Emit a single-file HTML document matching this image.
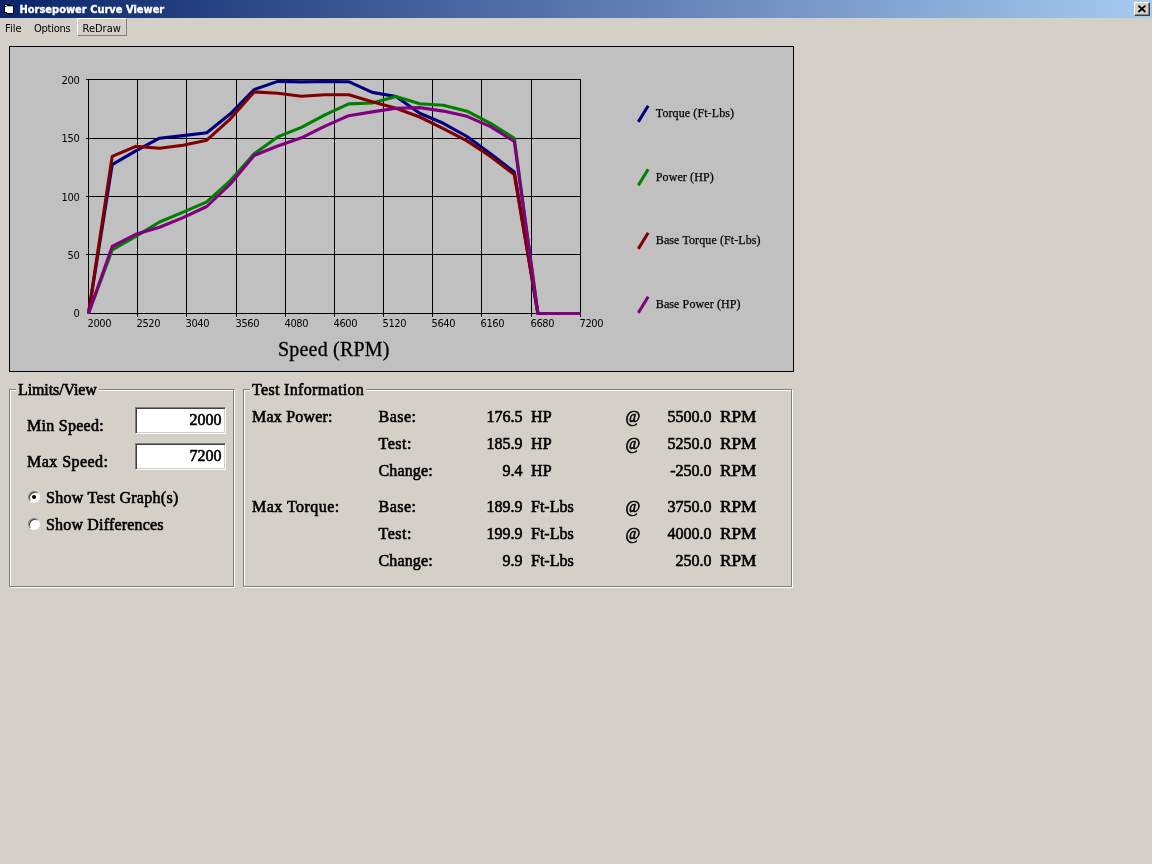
<!DOCTYPE html>
<html><head><meta charset="utf-8"><title>Horsepower Curve Viewer</title>
<style>
html,body{margin:0;padding:0}
body{width:1152px;height:864px;overflow:hidden;background:#D4D0C8;position:relative;font-family:"Liberation Sans",sans-serif;}
.abs{position:absolute}
#root{position:absolute;left:0;top:0;width:1152px;height:864px;will-change:transform}
#title{position:absolute;left:0;top:0;width:1152px;height:18px;background:linear-gradient(to right,#0A246A 0%,#A6CAF0 100%);}
#title .cap{position:absolute;left:19.5px;top:3px;font:bold 11px/13px "DejaVu Sans Condensed","Liberation Sans",sans-serif;color:#fff;white-space:nowrap;-webkit-text-stroke:0.3px #fff}
#close{position:absolute;left:1134px;top:2px;width:16px;height:14px;background:#D4D0C8;box-sizing:border-box;border:1px solid;border-color:#fff #404040 #404040 #fff;box-shadow:inset -1px -1px 0 #808080;}
.menu{position:absolute;top:22px;font:11px/14px "DejaVu Sans Condensed","Liberation Sans",sans-serif;color:#000;white-space:nowrap}
#redraw{position:absolute;left:77px;top:18px;width:50px;height:18px;box-sizing:border-box;border:1px solid;border-color:#fff #808080 #808080 #fff;}
#panel{position:absolute;left:9px;top:46px;width:785px;height:326px;box-sizing:border-box;border:1px solid #000;background:#C0C0C0}
svg.chart{position:absolute;left:0;top:0}
.tick text{font:11px "DejaVu Sans Condensed","Liberation Sans",sans-serif;fill:#000;letter-spacing:-0.4px}
.xlabel{font:20px "Liberation Serif",serif;fill:#000;letter-spacing:0.2px;stroke:#000;stroke-width:0.3px}
.leg{font:12px "Liberation Serif",serif;fill:#000;letter-spacing:0.1px;stroke:#000;stroke-width:0.25px}
.gb{position:absolute;box-sizing:border-box;border:1px solid #808080;box-shadow:inset 1px 1px 0 #fff, 1px 1px 0 #fff}
.gbt{position:absolute;background:#D4D0C8;padding:0 2px}
.t,.gbt{font:16px/18px "Liberation Serif",serif;color:#000;white-space:nowrap;-webkit-text-stroke:0.6px #000}
.t{position:absolute}
.r{text-align:right}
.rpm{display:inline-block;transform:scaleX(1.075);transform-origin:0 0}
.inp{position:absolute;box-sizing:border-box;background:#fff;border:1px solid;border-color:#808080 #fff #fff #808080;box-shadow:inset 1px 1px 0 #404040, inset -1px -1px 0 #D4D0C8}
.radio{position:absolute;width:12px;height:12px;border-radius:50%;box-sizing:border-box;background:#fff;border:1px solid;border-color:#808080 #fff #fff #808080;box-shadow:inset 1px 1px 0 #404040}
.radio.on::after{content:"";position:absolute;left:3px;top:3px;width:4px;height:4px;border-radius:50%;background:#000}
</style></head><body><div id="root">
<div id="title">
<svg class="abs" style="left:4px;top:4px" width="11" height="11" viewBox="0 0 11 11" shape-rendering="crispEdges"><rect x="0" y="0" width="10" height="10" fill="#000"/><rect x="1" y="1" width="2" height="1" fill="#A8F0F0"/><rect x="2" y="2" width="7" height="1" fill="#58D0C0"/><rect x="1" y="3" width="8" height="5" fill="#fff"/><rect x="3" y="8" width="6" height="1" fill="#fff"/><rect x="6" y="0" width="4" height="1" fill="#1B3478"/><rect x="0" y="9" width="2" height="1" fill="#1B3478"/></svg>
<span class="cap">Horsepower Curve Viewer</span>
<div id="close"><svg width="14" height="12" viewBox="0 0 14 12" style="position:absolute;left:0;top:0"><path d="M3.4 2.6 L10.4 9 M10.4 2.6 L3.4 9" stroke="#000" stroke-width="1.8" fill="none"/></svg></div>
</div>
<span class="menu" style="left:5px">File</span>
<span class="menu" style="left:34px;letter-spacing:-0.25px">Options</span>
<div id="redraw"></div>
<span class="menu" style="left:82.5px">ReDraw</span>
<div id="panel"></div>
<svg class="chart" width="1152" height="864" viewBox="0 0 1152 864">
<g stroke="#000" stroke-width="1" shape-rendering="crispEdges"><line x1="88.50" y1="79.0" x2="88.50" y2="314.0"/><line x1="137.50" y1="79.0" x2="137.50" y2="317.0"/><line x1="186.50" y1="79.0" x2="186.50" y2="317.0"/><line x1="236.50" y1="79.0" x2="236.50" y2="317.0"/><line x1="285.50" y1="79.0" x2="285.50" y2="317.0"/><line x1="334.50" y1="79.0" x2="334.50" y2="317.0"/><line x1="383.50" y1="79.0" x2="383.50" y2="317.0"/><line x1="432.50" y1="79.0" x2="432.50" y2="317.0"/><line x1="481.50" y1="79.0" x2="481.50" y2="317.0"/><line x1="531.50" y1="79.0" x2="531.50" y2="317.0"/><line x1="580.50" y1="79.0" x2="580.50" y2="317.0"/><line x1="88.0" y1="313.50" x2="581.0" y2="313.50"/><line x1="86.0" y1="254.50" x2="581.0" y2="254.50"/><line x1="86.0" y1="196.50" x2="581.0" y2="196.50"/><line x1="86.0" y1="138.50" x2="581.0" y2="138.50"/><line x1="86.0" y1="79.50" x2="581.0" y2="79.50"/></g>
<polyline points="88.5,313.5 112.2,164.6 135.8,150.9 159.5,138.2 183.1,135.6 206.8,132.8 230.4,113.8 254.1,89.6 277.7,81.4 301.4,81.9 325.0,81.5 348.7,81.7 372.3,92.4 396.0,96.5 419.7,113.3 443.3,123.3 467.0,136.5 490.6,153.8 514.3,171.9 537.9,313.5 561.6,313.5 580.5,313.5" fill="none" stroke="#000080" stroke-width="3.1" stroke-linejoin="round" stroke-linecap="butt"/>
<polyline points="88.5,313.5 112.2,250.0 135.8,236.4 159.5,222.0 183.1,212.1 206.8,201.9 230.4,180.6 254.1,153.8 277.7,136.9 301.4,127.4 325.0,114.8 348.7,103.9 372.3,103.0 396.0,96.6 419.7,103.8 443.3,105.2 467.0,111.2 490.6,123.4 514.3,138.2 537.9,313.5 561.6,313.5 580.5,313.5" fill="none" stroke="#008000" stroke-width="3.1" stroke-linejoin="round" stroke-linecap="butt"/>
<polyline points="88.5,313.5 112.2,156.4 135.8,146.4 159.5,148.3 183.1,145.2 206.8,140.2 230.4,118.8 254.1,91.9 277.7,93.3 301.4,96.2 325.0,94.7 348.7,94.7 372.3,101.7 396.0,108.2 419.7,117.0 443.3,128.7 467.0,140.9 490.6,156.5 514.3,174.5 537.9,313.5 561.6,313.5 580.5,313.5" fill="none" stroke="#800000" stroke-width="3.1" stroke-linejoin="round" stroke-linecap="butt"/>
<polyline points="88.5,313.5 112.2,246.5 135.8,234.3 159.5,227.3 183.1,217.6 206.8,206.5 230.4,184.0 254.1,155.5 277.7,146.0 301.4,137.8 325.0,126.1 348.7,115.7 372.3,111.9 396.0,108.3 419.7,107.6 443.3,111.1 467.0,116.3 490.6,126.6 514.3,141.4 537.9,313.5 561.6,313.5 580.5,313.5" fill="none" stroke="#800080" stroke-width="3.1" stroke-linejoin="round" stroke-linecap="butt"/>
<g class="tick"><text x="79.3" y="317.0" text-anchor="end">0</text><text x="79.3" y="259.0" text-anchor="end">50</text><text x="79.3" y="201.0" text-anchor="end">100</text><text x="79.3" y="142.0" text-anchor="end">150</text><text x="79.3" y="84.0" text-anchor="end">200</text><text x="87.5" y="327">2000</text><text x="136.5" y="327">2520</text><text x="185.5" y="327">3040</text><text x="235.5" y="327">3560</text><text x="284.5" y="327">4080</text><text x="333.5" y="327">4600</text><text x="382.5" y="327">5120</text><text x="431.5" y="327">5640</text><text x="480.5" y="327">6160</text><text x="530.5" y="327">6680</text><text x="579.5" y="327">7200</text></g>
<text class="xlabel" x="278" y="355.5">Speed (RPM)</text>
<line x1="638.3" y1="121.9" x2="648.2" y2="105.7" stroke="#000080" stroke-width="3" stroke-linecap="butt"/>
<text class="leg" x="655.8" y="117.2">Torque (Ft-Lbs)</text>
<line x1="638.3" y1="185.4" x2="648.2" y2="169.2" stroke="#008000" stroke-width="3" stroke-linecap="butt"/>
<text class="leg" x="655.8" y="180.7">Power (HP)</text>
<line x1="638.3" y1="248.9" x2="648.2" y2="232.7" stroke="#800000" stroke-width="3" stroke-linecap="butt"/>
<text class="leg" x="655.8" y="244.2">Base Torque (Ft-Lbs)</text>
<line x1="638.3" y1="312.9" x2="648.2" y2="296.7" stroke="#800080" stroke-width="3" stroke-linecap="butt"/>
<text class="leg" x="655.8" y="308.2">Base Power (HP)</text>
</svg>
<div class="gb" style="left:9px;top:389px;width:225px;height:198px"></div>
<span class="gbt" style="left:16px;top:381px;letter-spacing:-0.10px">Limits/View</span>
<div class="gb" style="left:243px;top:389px;width:549px;height:198px"></div>
<span class="gbt" style="left:250px;top:381px;letter-spacing:0.33px">Test Information</span>
<span class="t" style="left:27px;top:417px;letter-spacing:0.27px">Min Speed:</span>
<span class="t" style="left:27px;top:453px;letter-spacing:0.45px">Max Speed:</span>
<div class="inp" style="left:135px;top:407px;width:91px;height:27px"></div>
<div class="inp" style="left:135px;top:443px;width:91px;height:27px"></div>
<span class="t r" style="left:140px;width:81.5px;top:411px">2000</span>
<span class="t r" style="left:140px;width:81.5px;top:447px">7200</span>
<div class="radio on" style="left:28px;top:491px"></div>
<div class="radio" style="left:28px;top:518px"></div>
<span class="t" style="left:46px;top:489px;letter-spacing:0.28px">Show Test Graph(s)</span>
<span class="t" style="left:46px;top:516px;letter-spacing:0.18px">Show Differences</span>
<span class="t" style="left:252px;top:407.5px;letter-spacing:0.20px">Max Power:</span>
<span class="t" style="left:378.5px;top:407.5px;letter-spacing:0.47px">Base:</span>
<span class="t r" style="left:422px;width:100.5px;top:407.5px">176.5</span>
<span class="t" style="left:531px;top:407.5px;letter-spacing:0.20px">HP</span>
<span class="t" style="left:625.5px;top:407.5px">@</span>
<span class="t r" style="left:611px;width:100.5px;top:407.5px">5500.0</span>
<span class="t rpm" style="left:720px;top:407.5px">RPM</span>
<span class="t" style="left:378.5px;top:434.5px;letter-spacing:0.50px">Test:</span>
<span class="t r" style="left:422px;width:100.5px;top:434.5px">185.9</span>
<span class="t" style="left:531px;top:434.5px;letter-spacing:0.20px">HP</span>
<span class="t" style="left:625.5px;top:434.5px">@</span>
<span class="t r" style="left:611px;width:100.5px;top:434.5px">5250.0</span>
<span class="t rpm" style="left:720px;top:434.5px">RPM</span>
<span class="t" style="left:378.5px;top:461.5px;letter-spacing:0.15px">Change:</span>
<span class="t r" style="left:422px;width:100.5px;top:461.5px">9.4</span>
<span class="t" style="left:531px;top:461.5px;letter-spacing:0.20px">HP</span>
<span class="t r" style="left:611px;width:100.5px;top:461.5px">-250.0</span>
<span class="t rpm" style="left:720px;top:461.5px">RPM</span>
<span class="t" style="left:252px;top:497.5px;letter-spacing:0.46px">Max Torque:</span>
<span class="t" style="left:378.5px;top:497.5px;letter-spacing:0.47px">Base:</span>
<span class="t r" style="left:422px;width:100.5px;top:497.5px">189.9</span>
<span class="t" style="left:531px;top:497.5px">Ft-Lbs</span>
<span class="t" style="left:625.5px;top:497.5px">@</span>
<span class="t r" style="left:611px;width:100.5px;top:497.5px">3750.0</span>
<span class="t rpm" style="left:720px;top:497.5px">RPM</span>
<span class="t" style="left:378.5px;top:524.5px;letter-spacing:0.50px">Test:</span>
<span class="t r" style="left:422px;width:100.5px;top:524.5px">199.9</span>
<span class="t" style="left:531px;top:524.5px">Ft-Lbs</span>
<span class="t" style="left:625.5px;top:524.5px">@</span>
<span class="t r" style="left:611px;width:100.5px;top:524.5px">4000.0</span>
<span class="t rpm" style="left:720px;top:524.5px">RPM</span>
<span class="t" style="left:378.5px;top:551.5px;letter-spacing:0.15px">Change:</span>
<span class="t r" style="left:422px;width:100.5px;top:551.5px">9.9</span>
<span class="t" style="left:531px;top:551.5px">Ft-Lbs</span>
<span class="t r" style="left:611px;width:100.5px;top:551.5px">250.0</span>
<span class="t rpm" style="left:720px;top:551.5px">RPM</span>
</div></body></html>
